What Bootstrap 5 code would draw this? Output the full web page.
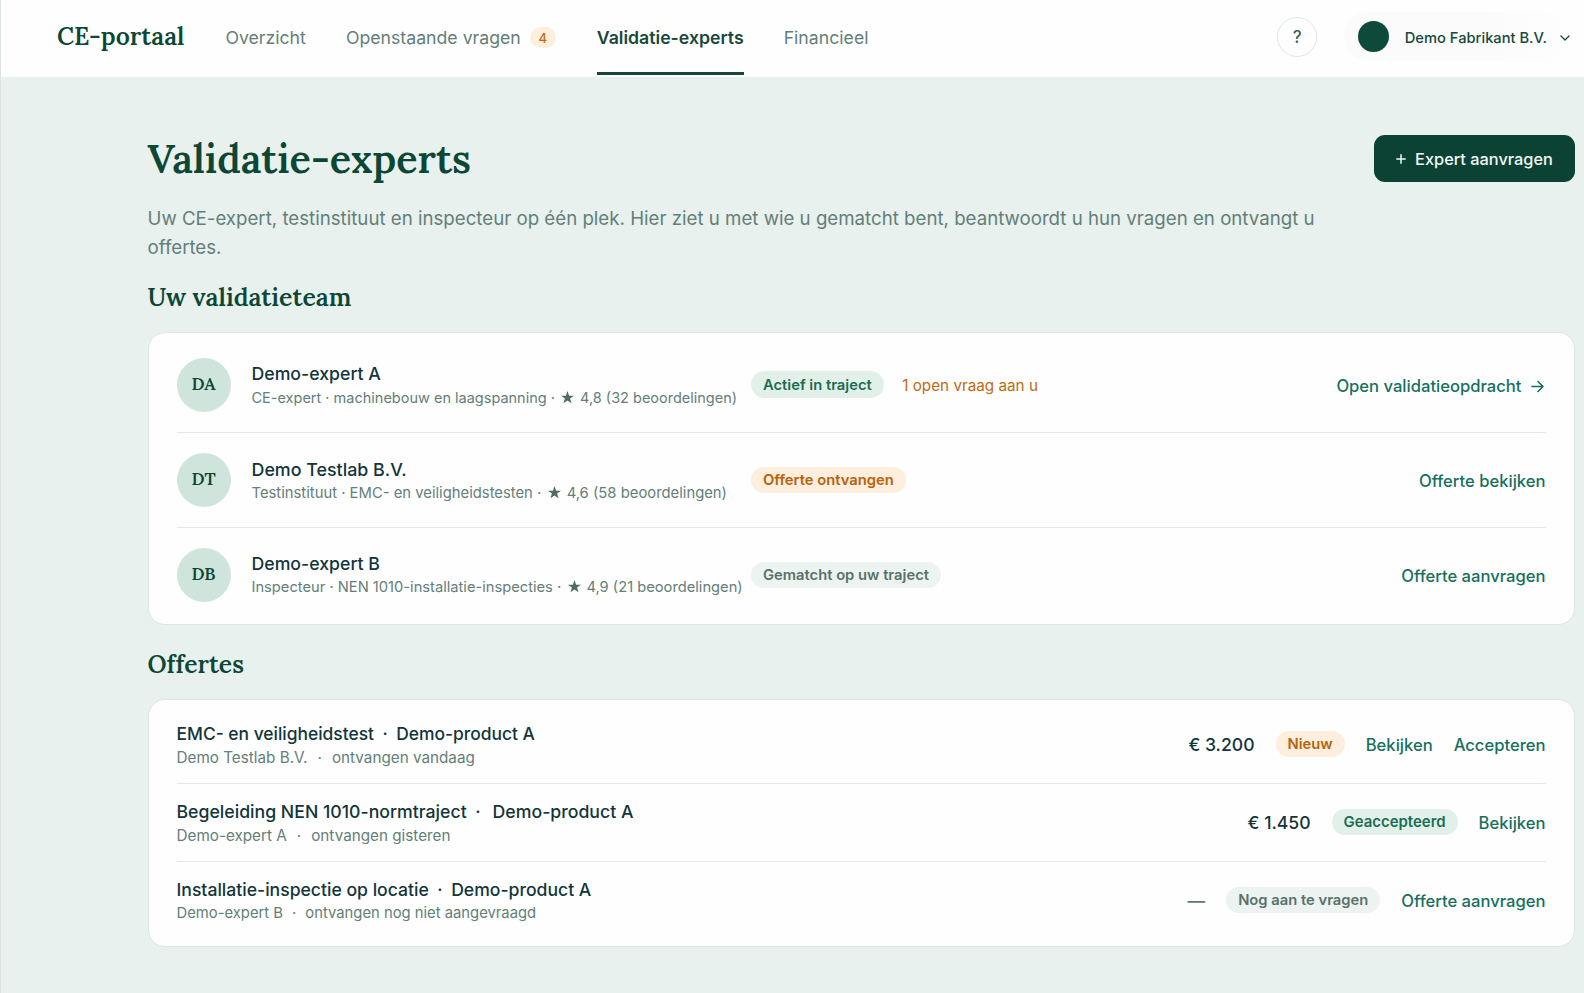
<!DOCTYPE html>
<html lang="nl">
<head>
<meta charset="utf-8">
<meta name="viewport" content="width=device-width, initial-scale=1">
<title>CE-portaal – Validatie-experts</title>
<link href="https://cdn.jsdelivr.net/npm/bootstrap@5.3.0/dist/css/bootstrap.min.css" rel="stylesheet">
<style>
:root{--forest:#0c4635;--ink:#12353a;--muted-green:#647f79;--line:#e2eae7;--teal:#16705f;--serif:"Lora","Noto Serif","Liberation Serif",serif}
body{font-family:"Inter","Liberation Sans",sans-serif;background:#e8f1ed;color:var(--ink);min-height:993px;border-left:1px solid #dce3e1;overflow-x:hidden}
a{text-decoration:none}
h1,h2,.navbar-brand,.avatar{font-family:var(--serif);color:var(--forest);font-weight:600}
.topbar{height:76.5px;background:#fefefe;padding:0 14px 0 56px}
.topbar .navbar-brand{font-size:24.7px;line-height:30px;margin:-4px 41px 0 0;padding:0}
.topbar .nav{gap:40px;height:76px}
.topbar .nav-link{font-size:17.7px;line-height:24px;padding:26px 0 23px;color:var(--muted-green);border-bottom:3px solid transparent;height:75px}
.topbar .nav-link.active{color:#17483b;font-weight:600;border-color:#17483b;margin-left:1px}
.count{width:26px;height:21px;font-size:13px;font-weight:500;color:#c26a10;background:#fdefdb;margin-left:9px}
.help{width:40px;height:40px;border:1.5px solid #dde8e4;color:#3c5f56;font-size:17px;font-weight:500;padding-top:1px;margin:-2px 27px 0 0}
.account{height:49px;padding:0 0 0 14px;margin-top:-3px;font-size:14.7px;font-weight:500;color:#17483b;background:linear-gradient(90deg,#fafbfa 60%,#fefefe);border-radius:25px}
.account .dot{width:31px;height:31px;background:#0e4a3a;margin-right:15.5px}
.account .org{padding-top:2px;margin-right:13px}
main{padding:58.500px 9.5px 0 146.5px}
h1{font-size:39.6px;line-height:48px;margin:0}
.lead-text{font-size:18.68px;line-height:29px;color:var(--muted-green);width:1180px;margin:21px 0 0}
h2{font-size:24.6px;line-height:30px;margin:24px 0 20px}
h2.after-lead{font-size:24.85px;margin-top:20px}
.btn-request{width:201px;height:46.5px;border-radius:11px;background:#0b4233;color:#f4f8f6;font-size:16.35px;font-weight:500;padding:2px 0 0}
.btn-request:hover{background:#0e5040;color:#fff}
.panel{background:#fefefe;border:1px solid #dce8e3;border-radius:17px;padding:0 28px}
.team{padding-top:4px;padding-bottom:2px;height:293px}
.offers{padding-top:5.5px;height:248px}
.team-row{height:95px;border-bottom:1.5px solid var(--line)}
.team-row:first-child{height:96px}
.offer-row{height:78px;border-bottom:1.5px solid var(--line)}
.team-row:last-child,.offer-row:last-child{border:0;padding-bottom:1px}
.avatar{width:54px;height:54px;background:#cfe4da;font-size:17.3px;margin-right:21px}
.who{width:499.5px;padding-top:2px}
.title-line{font-size:17.7px;font-weight:500;line-height:24px}
.meta-line{font-size:14.5px;line-height:23.5px;color:var(--muted-green);white-space:nowrap}
.meta-line svg{margin:-3px 1.5px 0 2.5px}
.team-row:nth-child(2) .title-line{font-size:17.85px}
.team-row:nth-child(2) .who{padding-top:3px}
.team-row:nth-child(2) .meta-line{font-size:14.82px}
.team-row:nth-child(3) .meta-line{font-size:14.7px}
.offer-what{padding-top:3px}
.offer-row:nth-child(1) .title-line{font-size:17.42px}
.offer-row:nth-child(3) .title-line{font-size:17.6px}
.offer-row:nth-child(-n+2) .meta-line{font-size:15.25px}
.offer-row:nth-child(-n+2) .meta-line .sep{margin:0 10px}
.offer-row .meta-line{font-size:14.8px}
.offer-row:nth-child(3) .meta-line .sep{margin:0 9px}
.tag{height:26.5px;padding:1px 12px 0;font-size:14.75px;font-weight:600;white-space:nowrap}
.tag-green{background:#e1f1ea;color:#1b6c52}
.tag-amber{background:#fdeedd;color:#b8620c}
.tag-gray{background:#edf3f1;color:#587269}
.offer-row .tag-green{font-size:14.95px}
.open-q{font-size:15.25px;color:#bd6c12;margin-left:18.5px;padding-top:3px}
.action{font-size:16.6px;font-weight:500;color:var(--teal);white-space:nowrap;padding-top:3px}
.offer-row .action{padding-top:2px}
.money{font-size:17.6px;font-weight:550;padding-top:2px}
.money-none{color:#5d7b74}
.offer-side{gap:21px}
.sep{margin:0 8.5px}
</style>
</head>
<body>
<svg class="d-none"><symbol id="star" viewBox="0 0 24 24"><path d="M12 0l2.900 8.600H24l-7.300 5.400 2.800 8.800L12 17.500 4.500 22.800l2.800-8.800L0 8.600h9.100z"/></symbol></svg>
<nav class="topbar navbar-expand d-flex align-items-center">
  <a class="navbar-brand" href="#">CE-portaal</a>
  <div class="nav flex-nowrap">
    <a class="nav-link" href="#">Overzicht</a>
    <a class="nav-link d-flex align-items-center" href="#">Openstaande vragen<span class="count rounded-pill d-inline-flex align-items-center justify-content-center">4</span></a>
    <a class="nav-link active" href="#">Validatie-experts</a>
    <a class="nav-link" href="#">Financieel</a>
  </div>
  <a class="help rounded-circle d-flex align-items-center justify-content-center ms-auto" href="#">?</a>
  <a class="account d-flex align-items-center" href="#"><span class="dot rounded-circle"></span><span class="org">Demo Fabrikant B.V.</span>
    <svg class="mt-1" width="10" height="7" viewBox="0 0 10 7" fill="none" stroke="#17483b" stroke-width="1.300" stroke-linecap="round" stroke-linejoin="round"><path d="M1 1l4 4 4-4"/></svg></a>
</nav>
<main>
  <header class="d-flex justify-content-between align-items-start">
    <h1>Validatie-experts</h1>
    <button class="btn btn-request d-flex align-items-center justify-content-center" type="button">
      <svg class="me-2" width="12" height="12" viewBox="0 0 12 12" stroke="#f4f8f6" stroke-width="1.5" stroke-linecap="round"><path d="M6 1.800v8.400M1.800 6h8.400"/></svg>Expert aanvragen</button>
  </header>
  <p class="lead-text">Uw CE-expert, testinstituut en inspecteur op één plek. Hier ziet u met wie u gematcht bent, beantwoordt u hun vragen en ontvangt u offertes.</p>
  <h2 class="after-lead">Uw validatieteam</h2>
  <section class="panel team">
    <div class="team-row d-flex align-items-center">
      <div class="avatar rounded-circle d-flex align-items-center justify-content-center">DA</div>
      <div class="who"><div class="title-line">Demo-expert A</div><div class="meta-line">CE-expert · machinebouw en laagspanning · <svg width="13" height="13" fill="#4c6d66"><use href="#star"/></svg> 4,8 (32 beoordelingen)</div></div>
      <span class="tag tag-green rounded-pill d-flex align-items-center">Actief in traject</span><span class="open-q">1 open vraag aan u</span>
      <a class="action ms-auto" href="#">Open validatieopdracht<svg style="margin:-2px 2px 0 9px" width="13" height="13" viewBox="0 0 13 13" fill="none" stroke="#16705f" stroke-width="1.6" stroke-linecap="round" stroke-linejoin="round"><path d="M1 6.500h11M7 1.500l5 5-5 5"/></svg></a>
    </div>
    <div class="team-row d-flex align-items-center">
      <div class="avatar rounded-circle d-flex align-items-center justify-content-center">DT</div>
      <div class="who"><div class="title-line">Demo Testlab B.V.</div><div class="meta-line">Testinstituut · EMC- en veiligheidstesten · <svg width="13" height="13" fill="#4c6d66"><use href="#star"/></svg> 4,6 (58 beoordelingen)</div></div>
      <span class="tag tag-amber rounded-pill d-flex align-items-center">Offerte ontvangen</span>
      <a class="action ms-auto" href="#">Offerte bekijken</a>
    </div>
    <div class="team-row d-flex align-items-center">
      <div class="avatar rounded-circle d-flex align-items-center justify-content-center">DB</div>
      <div class="who"><div class="title-line">Demo-expert B</div><div class="meta-line">Inspecteur · NEN 1010-installatie-inspecties · <svg width="13" height="13" fill="#4c6d66"><use href="#star"/></svg> 4,9 (21 beoordelingen)</div></div>
      <span class="tag tag-gray rounded-pill d-flex align-items-center">Gematcht op uw traject</span>
      <a class="action ms-auto" href="#">Offerte aanvragen</a>
    </div>
  </section>
  <h2>Offertes</h2>
  <section class="panel offers">
    <div class="offer-row d-flex align-items-center justify-content-between">
      <div class="offer-what"><div class="title-line">EMC- en veiligheidstest<span class="sep">·</span>Demo-product A</div><div class="meta-line">Demo Testlab B.V.<span class="sep">·</span>ontvangen vandaag</div></div>
      <div class="offer-side d-flex align-items-center"><span class="money">€ 3.200</span><span class="tag tag-amber rounded-pill d-flex align-items-center">Nieuw</span><a class="action" href="#">Bekijken</a><a class="action" href="#">Accepteren</a></div>
    </div>
    <div class="offer-row d-flex align-items-center justify-content-between">
      <div class="offer-what"><div class="title-line">Begeleiding NEN 1010-normtraject<span class="sep me-2">·</span><span class="ms-1">Demo-product A</span></div><div class="meta-line">Demo-expert A<span class="sep">·</span>ontvangen gisteren</div></div>
      <div class="offer-side d-flex align-items-center"><span class="money">€ 1.450</span><span class="tag tag-green rounded-pill d-flex align-items-center">Geaccepteerd</span><a class="action" href="#">Bekijken</a></div>
    </div>
    <div class="offer-row d-flex align-items-center justify-content-between">
      <div class="offer-what"><div class="title-line">Installatie-inspectie op locatie<span class="sep">·</span>Demo-product A</div><div class="meta-line">Demo-expert B<span class="sep">·</span>ontvangen nog niet aangevraagd</div></div>
      <div class="offer-side d-flex align-items-center"><span class="money money-none">—</span><span class="tag tag-gray rounded-pill d-flex align-items-center">Nog aan te vragen</span><a class="action" href="#">Offerte aanvragen</a></div>
    </div>
  </section>
</main>
<script src="https://cdn.jsdelivr.net/npm/bootstrap@5.3.0/dist/js/bootstrap.bundle.min.js"></script>
</body>
</html>
